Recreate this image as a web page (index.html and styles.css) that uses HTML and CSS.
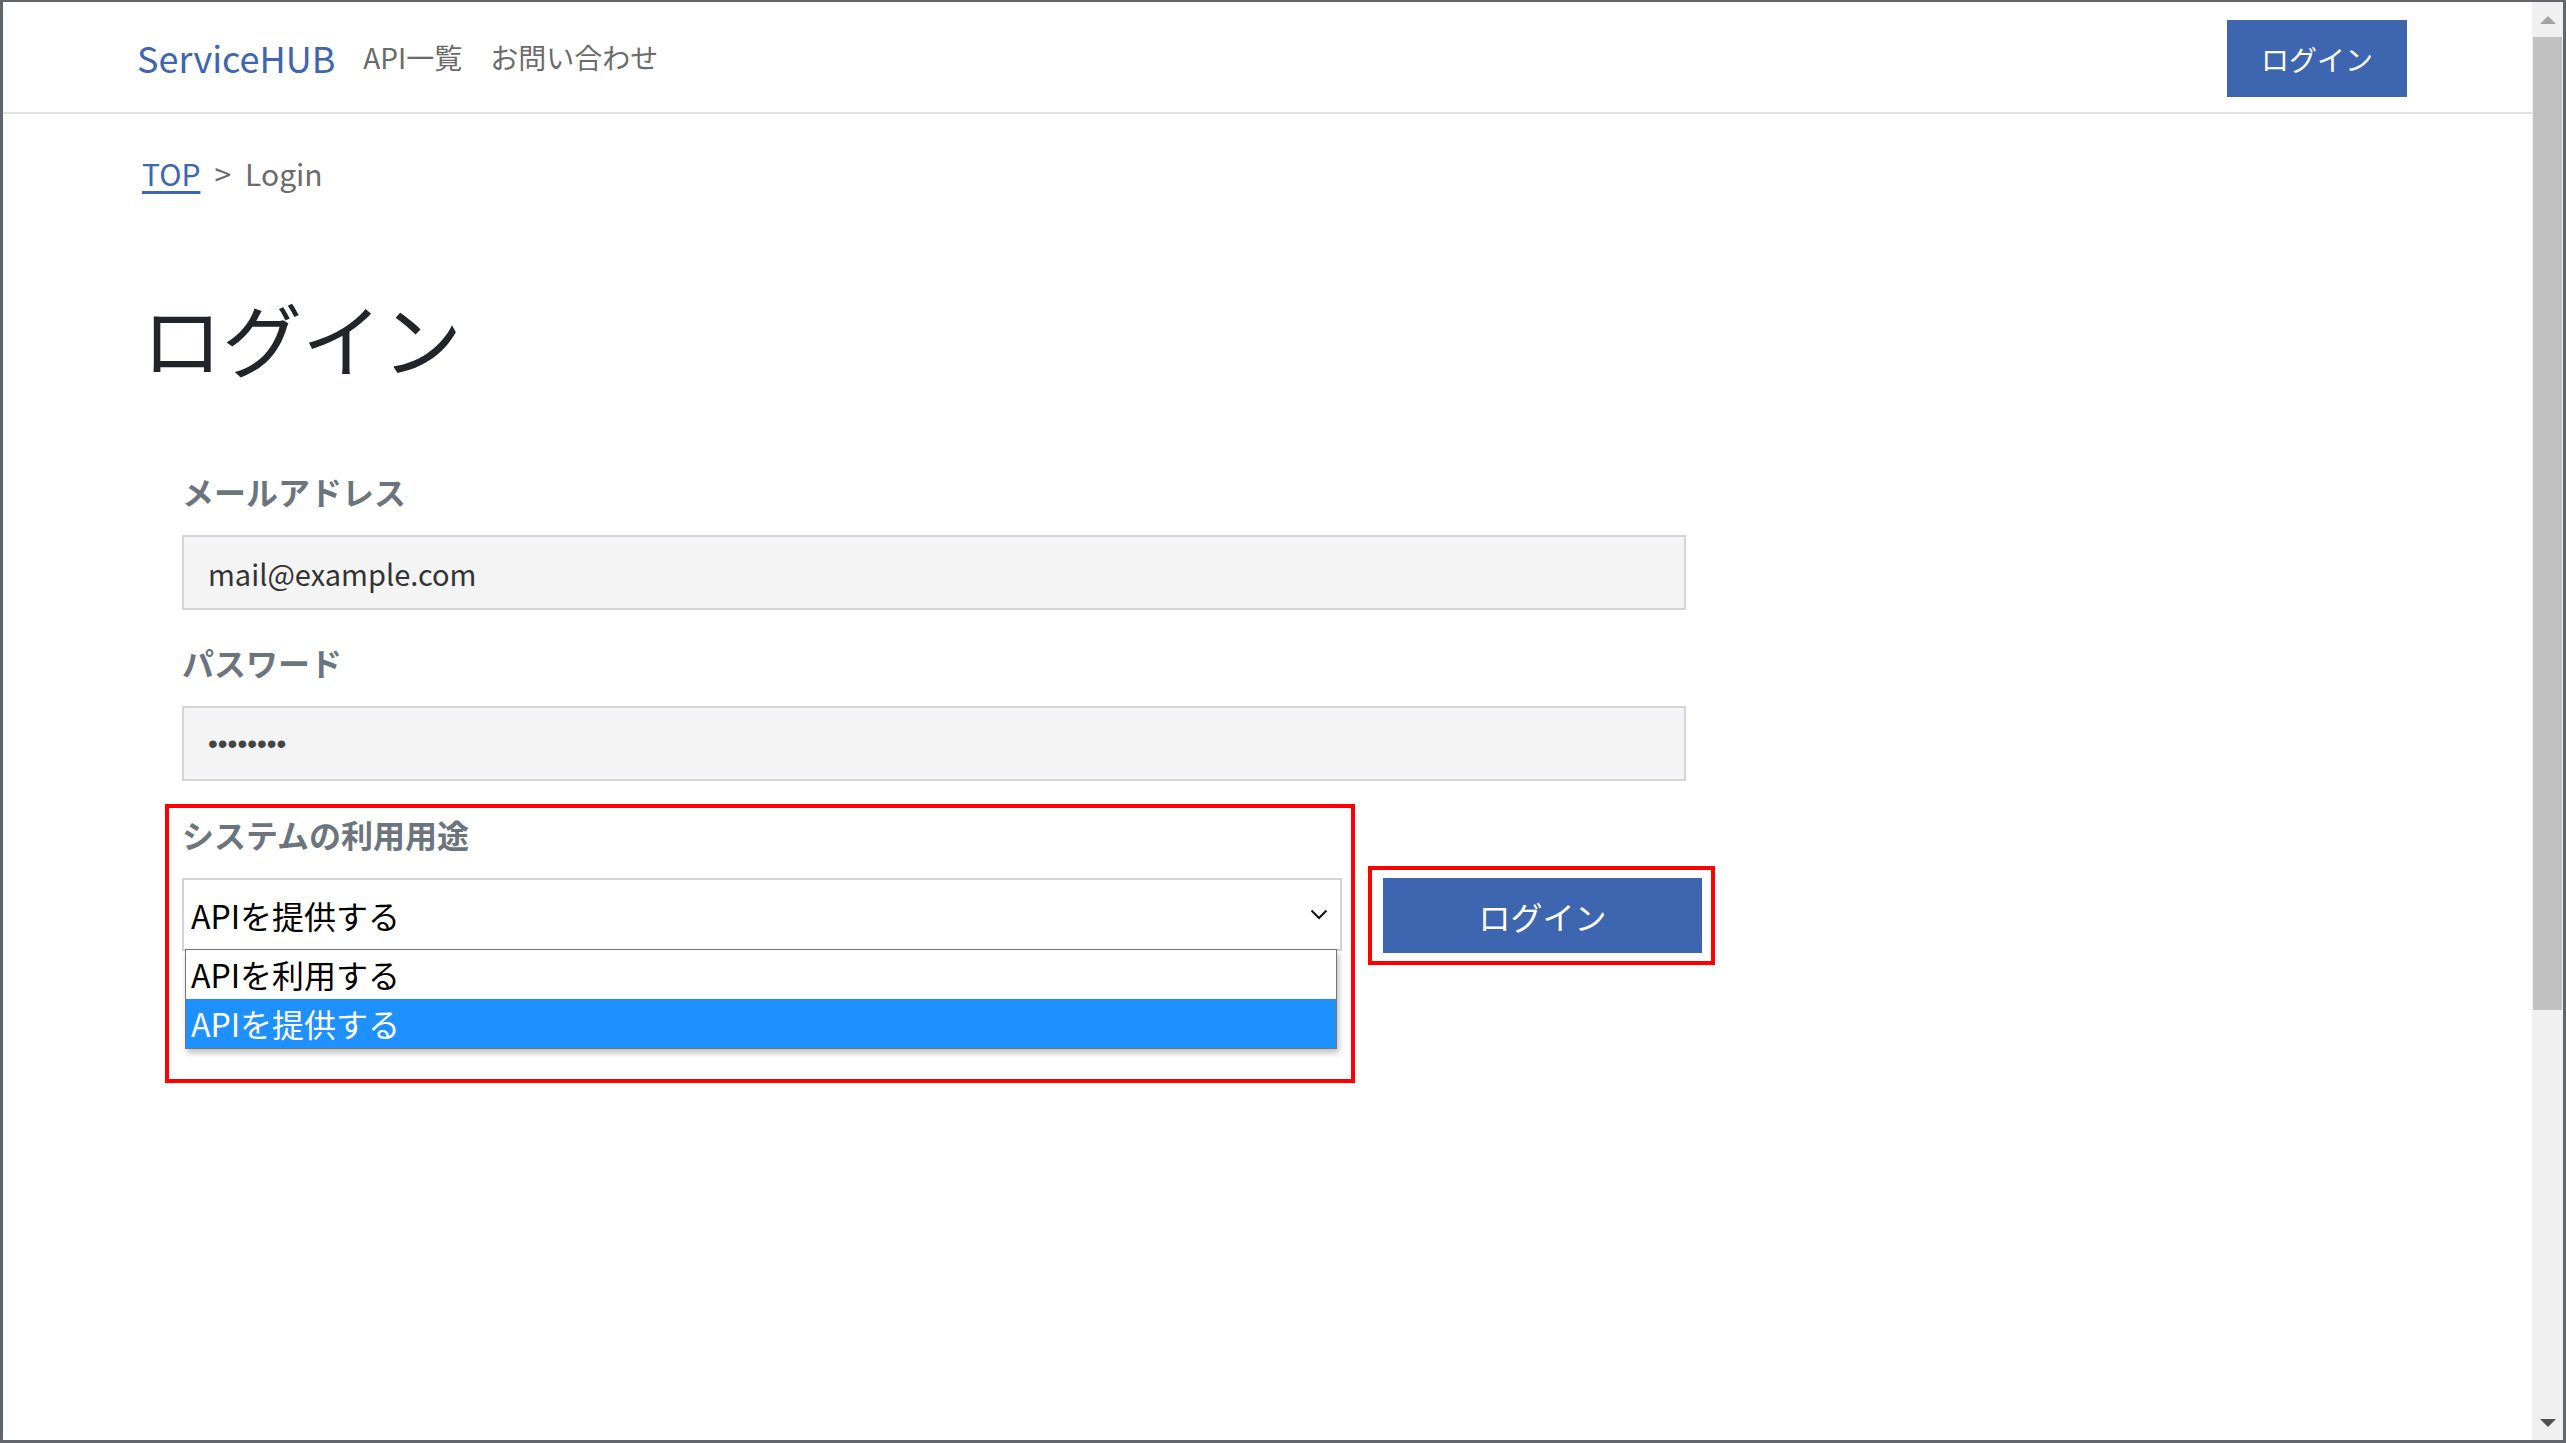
FILE: index.html
```html
<!DOCTYPE html>
<html lang="ja">

<head>
    <meta charset="UTF-8">
    <title>Login | ServiceHUB</title>

    <link rel="stylesheet" href="styles.css">
</head>

<body>
    <div class="window">
        <div class="page">
            <header class="site-header">
                <nav class="nav">
                    <a class="brand" href="/">ServiceHUB</a>
                    <a class="nav-link" href="/apis">API一覧</a>
                    <a class="nav-link" href="/contact">お問い合わせ</a>
                </nav>
                <a class="btn btn-header" href="/login">ログイン</a>
            </header>

            <main class="content">
                <ol class="breadcrumb">
                    <li><a href="/">TOP</a></li>
                    <li class="sep">&gt;</li>
                    <li>Login</li>
                </ol>

                <h1 class="title">ログイン</h1>

                <form class="login-form" method="POST" action="" onsubmit="return false">
                    <div class="field">
                        <label for="email">メールアドレス</label>
                        <input id="email" name="email" type="text" value="mail@example.com" />
                    </div>
                    <div class="field field-last">
                        <label for="password">パスワード</label>
                        <input id="password" class="password" name="password" type="password" value="password" />
                    </div>

                    <div class="login-row">
                        <div class="usage-box mark">
                            <label>システムの利用用途</label>
                            <div class="select">
                                <span class="select-value">APIを提供する</span>
                                <svg class="chevron" width="18" height="11" viewBox="0 0 18 11">
                                    <polyline points="1.5,1.5 9,9 16.5,1.5" fill="none" stroke="#111" stroke-width="2" />
                                </svg>
                                <ul class="select-options">
                                    <li>APIを利用する</li>
                                    <li class="selected">APIを提供する</li>
                                </ul>
                            </div>
                        </div>
                        <div class="submit-box mark">
                            <button class="btn btn-submit" type="submit">ログイン</button>
                        </div>
                    </div>
                </form>
            </main>
        </div>

        <div class="scrollbar">
            <div class="scroll-btn"><span class="arrow-up"></span></div>
            <div class="scroll-track">
                <div class="scroll-thumb"></div>
            </div>
            <div class="scroll-btn"><span class="arrow-down"></span></div>
        </div>
    </div>
</body>

</html>
```

FILE: styles.css
```css
* {
    box-sizing: border-box;
    font-family: "Noto Sans CJK JP", "Noto Sans", sans-serif;
}

html,
body {
    padding: 0;
    margin: 0;
}

a {
    text-decoration: none;
}

.window {
    display: flex;
    width: 2566px;
    height: 1443px;
    border: 3px solid #626569;
    border-top-width: 2px;
    background-color: white;
}

.page {
    flex: 1;
}

/* header */

.site-header {
    display: flex;
    align-items: center;
    justify-content: space-between;
    height: 112px;
    padding: 0 125px 0 134px;
    border-bottom: 2px solid #e3e3e3;
}

.nav {
    display: flex;
    align-items: center;
    gap: 28px;
}

.brand {
    color: #3d65b0;
    font-size: 36px;
}

.nav-link {
    color: #6b6b6b;
    font-size: 28px;
}

.btn {
    display: flex;
    align-items: center;
    justify-content: center;
    background-color: #3d65b0;
    color: white;
    border: none;
    cursor: pointer;
}

.btn-header {
    width: 180px;
    height: 77px;
    margin-top: 3px;
    font-size: 28px;
}

/* content */

.content {
    padding-left: 139px;
}

.breadcrumb {
    display: flex;
    gap: 14px;
    margin: 35px 0 0;
    padding: 0;
    list-style: none;
    font-size: 30px;
    line-height: 48px;
    color: #6b6b6b;
}

.breadcrumb a {
    color: #3d65b0;
    text-decoration: underline;
    text-underline-offset: 5px;
}

.title {
    margin: 92px 0 0;
    font-size: 80px;
    line-height: 94px;
    font-weight: 400;
    color: #212529;
}

.login-form {
    margin-top: 84px;
    padding-left: 40px;
}

.login-form label {
    display: block;
    margin-bottom: 20px;
    font-size: 32px;
    line-height: 48px;
    font-weight: 700;
    color: #6c757d;
}

.field input {
    display: block;
    width: 1504px;
    height: 75px;
    margin-bottom: 28px;
    padding: 0 24px;
    border: 2px solid #d4d4da;
    background-color: #f4f4f4;
    color: #333;
    font-size: 29px;
    outline: none;
}

.field input.password {
    font-family: "Liberation Sans", sans-serif;
    font-size: 28px;
    color: #444;
}

.field-last input {
    margin-bottom: 23px;
}

.login-row {
    display: flex;
    align-items: flex-start;
}

.mark {
    border: 4px solid #ff0000;
}

.usage-box {
    width: 1190px;
    margin-left: -17px;
    padding: 2px 9px 128px 13px;
}

.select {
    position: relative;
    display: flex;
    align-items: center;
    justify-content: space-between;
    height: 73px;
    padding: 0 12px 0 7px;
    border: 2px solid #d0d4d6;
    background-color: white;
    font-size: 32px;
    color: #000;
}

.select-options {
    position: absolute;
    top: 100%;
    left: 1px;
    right: 3px;
    margin: 0;
    padding: 0;
    list-style: none;
    border: 1px solid #767676;
    background-color: white;
    box-shadow: 2px 4px 6px rgba(0, 0, 0, 0.25);
}

.select-options li {
    height: 49px;
    padding-left: 5px;
    line-height: 49px;
}

.select-options li.selected {
    background-color: #1e90ff;
    color: white;
}

.submit-box {
    margin: 62px 0 0 13px;
    padding: 8px 9px 8px 11px;
}

.btn-submit {
    width: 319px;
    height: 75px;
    font-size: 32px;
}

/* fake browser scrollbar */

.scrollbar {
    display: flex;
    flex-direction: column;
    width: 31px;
    background-color: #f0f0f0;
}

.scroll-btn {
    display: flex;
    align-items: center;
    justify-content: center;
    height: 35px;
}

.scroll-track {
    flex: 1;
}

.scroll-thumb {
    height: 973px;
    margin: 0 1px;
    background-color: #c1c1c1;
}

.arrow-up,
.arrow-down {
    width: 0;
    height: 0;
    border-left: 8px solid transparent;
    border-right: 8px solid transparent;
}

.arrow-up {
    border-bottom: 8px solid #a3a3a3;
}

.arrow-down {
    border-top: 8px solid #505050;
}
```
